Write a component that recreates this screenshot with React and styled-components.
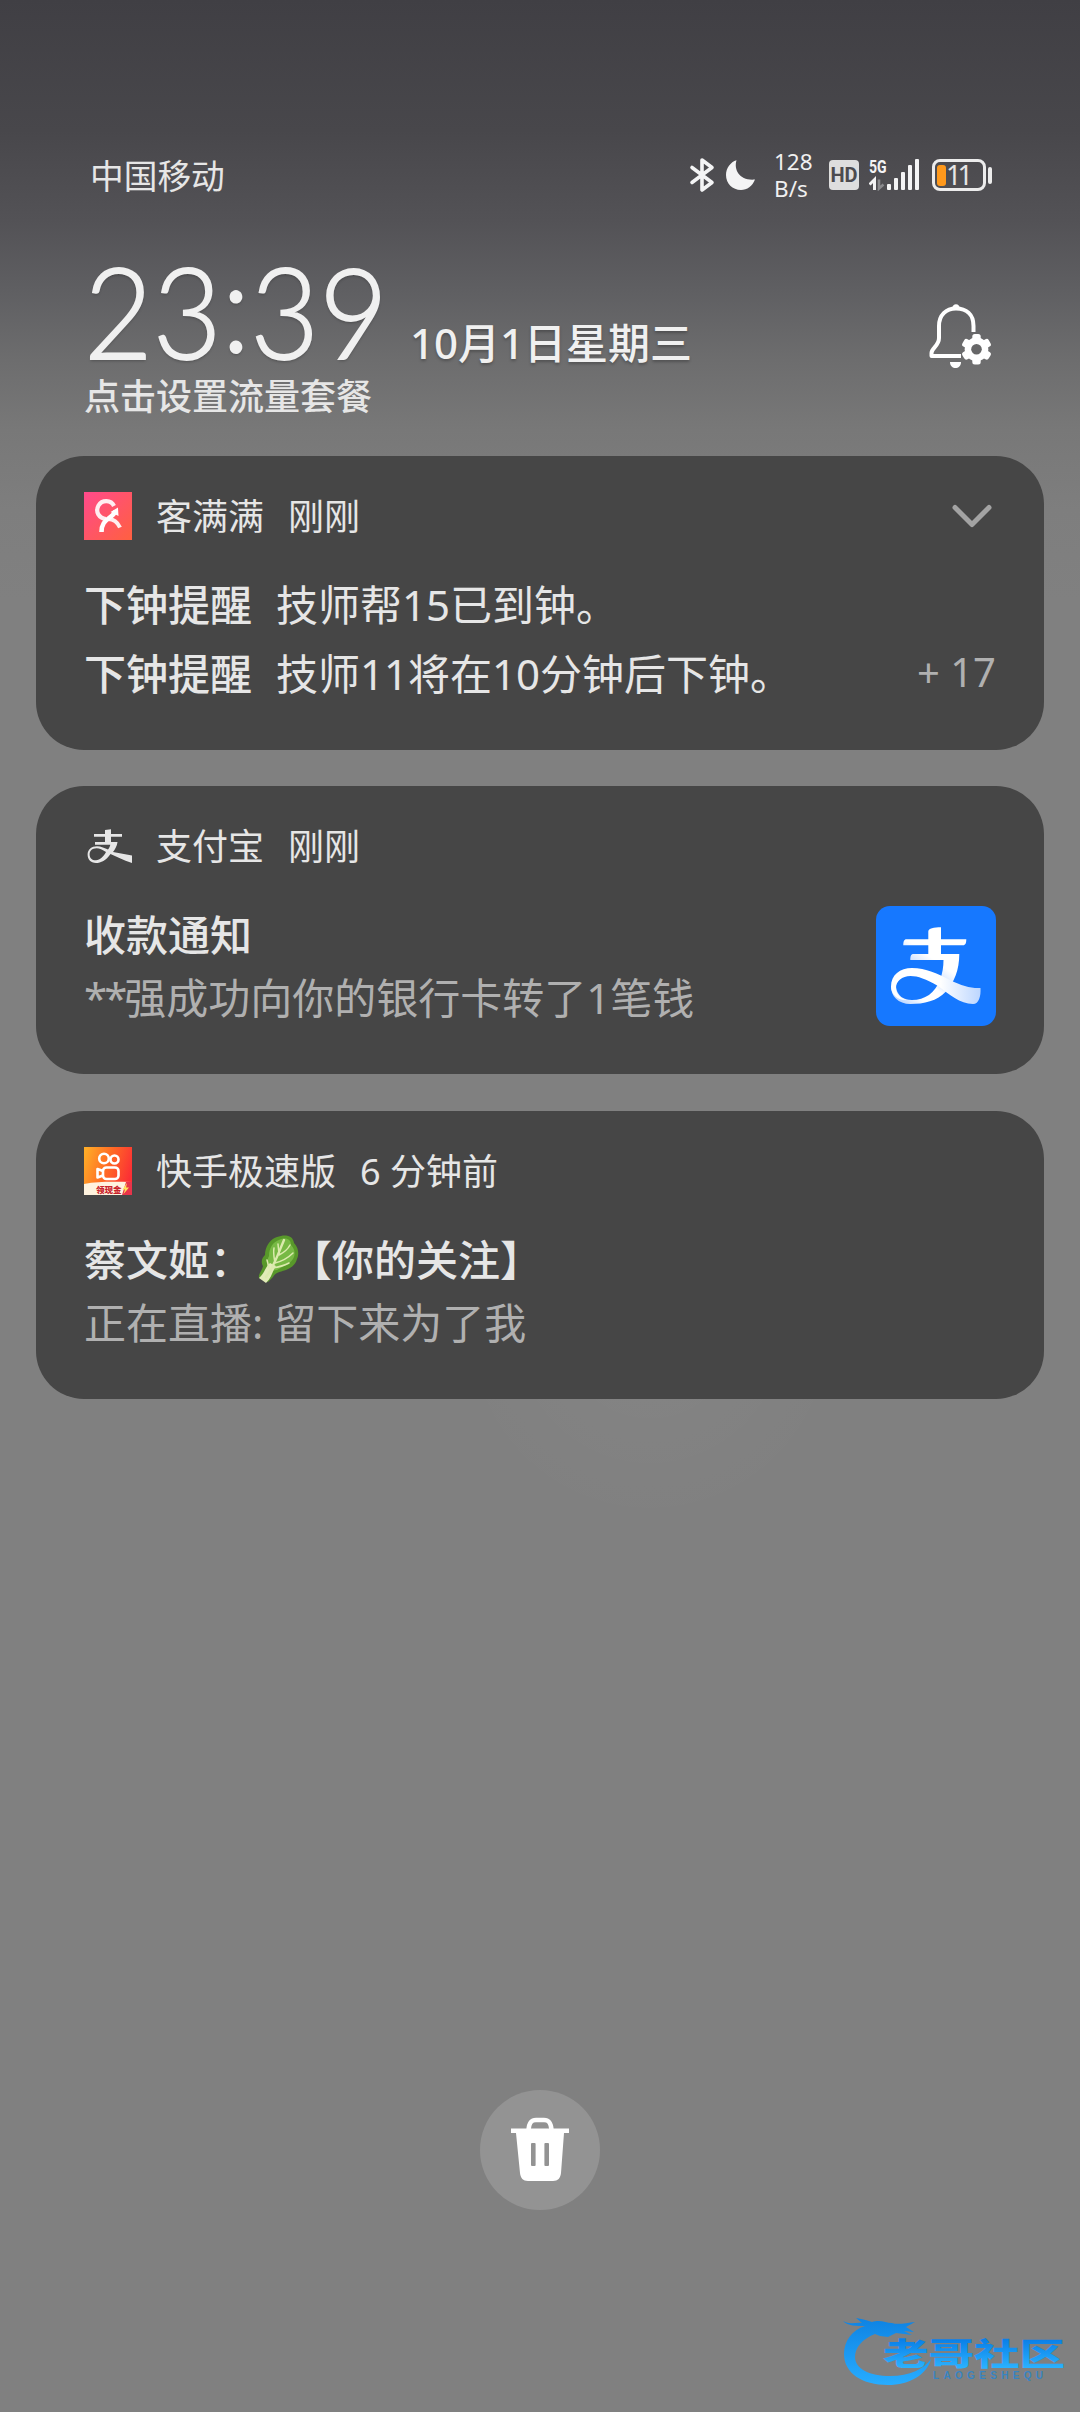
import styled, { createGlobalStyle } from "styled-components";

const notifications = [
  {
    id: "kemanman",
    app: "客满满",
    time: "刚刚",
    icon: <KemanmanIcon />,
    height: 294,
    expandable: true,
    lines: [
      { title: "下钟提醒", text: "技师帮15已到钟。" },
      { title: "下钟提醒", text: "技师11将在10分钟后下钟。" },
    ],
    more: "+ 17",
  },
  {
    id: "alipay",
    app: "支付宝",
    time: "刚刚",
    icon: <AlipayGlyph />,
    height: 288,
    title: "收款通知",
    body: (
      <>
        <Mask>**</Mask>强成功向你的银行卡转了1笔钱
      </>
    ),
    picture: <AlipayLogo />,
  },
  {
    id: "kuaishou",
    app: "快手极速版",
    time: "6 分钟前",
    icon: <KuaishouIcon />,
    height: 288,
    title: (
      <>
        蔡文姬：
        <CabbageIcon />
        【你的关注】
      </>
    ),
    body: "正在直播: 留下来为了我",
  },
];

export default function App() {
  return (
    <Screen>
      <GlobalStyle />
      <StatusBar />
      <Header>
        <div>
          <ClockRow>
            <Clock>
              <span>23</span>
              <Colon>:</Colon>
              <span>39</span>
            </Clock>
            <DateText>10月1日星期三</DateText>
          </ClockRow>
          <PlanHint>点击设置流量套餐</PlanHint>
        </div>
        <BellButton aria-label="通知设置">
          <BellIcon />
        </BellButton>
      </Header>
      <List>
        {notifications.map((item) => (
          <NotificationCard key={item.id} {...item} />
        ))}
      </List>
      <ClearButton aria-label="清除">
        <TrashIcon />
      </ClearButton>
      <Watermark />
    </Screen>
  );
}

function Mask({ children }) {
  return <MaskText>{children}</MaskText>;
}

function StatusBar() {
  return (
    <Status>
      <Carrier>中国移动</Carrier>
      <StatusIcons>
        <svg width="26" height="36" viewBox="0 0 26 36">
          <path
            d="M3 10.5 L23 25.5 L13 33 V3 L23 10.5 L3 25.5"
            fill="none"
            stroke="#f4f4f5"
            strokeWidth="3.6"
            strokeLinecap="round"
            strokeLinejoin="round"
          />
        </svg>
        <MoonSvg width="32" height="32" viewBox="0 0 32 32">
          <path
            d="M11.5 1.2 C8.5 11 15 22 30 20.5 C27.5 27 22 31 16 31 C7.5 31 1 24.5 1 16 C1 9 5.5 3 11.5 1.2 Z"
            fill="#f4f4f5"
          />
        </MoonSvg>
        <Speed>
          <span>128</span>
          <span>B/s</span>
        </Speed>
        <HdBadge>HD</HdBadge>
        <Signal>
          <SignalType>5G</SignalType>
          <svg width="50" height="32" viewBox="0 0 50 32">
            <path d="M0.5 25.5 L5.5 20.5 V31" stroke="#f4f4f5" strokeWidth="3" fill="none" />
            <path d="M10 20.5 V29.5 L14.5 25.5" stroke="#8a8a8d" strokeWidth="2.6" fill="none" />
            <g fill="#f4f4f5">
              <rect x="18" y="25" width="4" height="6" rx="1" />
              <rect x="25" y="19" width="4" height="12" rx="1" />
              <rect x="32" y="13" width="4" height="18" rx="1" />
              <rect x="39" y="6" width="4" height="25" rx="1" />
              <rect x="46" y="0" width="4" height="31" rx="1" />
            </g>
          </svg>
        </Signal>
        <Battery>
          <BatteryBody>
            <BatteryLevel />
            11
          </BatteryBody>
          <BatteryTip />
        </Battery>
      </StatusIcons>
    </Status>
  );
}

function NotificationCard({ app, time, icon, height, expandable, lines, more, title, body, picture }) {
  return (
    <Card $height={height}>
      <CardHeader>
        {icon}
        <AppName>{app}</AppName>
        <Time>{time}</Time>
        {expandable && (
          <Chevron width="42" height="28" viewBox="0 0 42 28">
            <path d="M4 5.5 L21 22.5 L38 5.5" />
          </Chevron>
        )}
      </CardHeader>
      {lines ? (
        <Lines>
          {lines.map((line) => (
            <Line key={line.text}>
              <strong>{line.title}</strong>
              <span>{line.text}</span>
            </Line>
          ))}
          <More>{more}</More>
        </Lines>
      ) : (
        <Content>
          <div>
            <Title>{title}</Title>
            <Body>{body}</Body>
          </div>
          {picture}
        </Content>
      )}
    </Card>
  );
}

function BellIcon() {
  return (
    <svg width="64" height="68" viewBox="0 0 64 68">
      <path
        d="M44.5 30 V24 C44.5 12 37 6.5 27 6.5 C17 6.5 10 13 10 24 V36 C10 44 2.5 46 2.5 51 V54 H32"
        fill="none"
        stroke="#fff"
        strokeWidth="4"
        strokeLinejoin="round"
      />
      <path d="M23 7 C23 0.5 31 0.5 31 7 Z" fill="#fff" />
      <path d="M21 60 H32 C32 68 21 68 21 60 Z" fill="#fff" />
      <g transform="translate(47.5 47.3)">
        <g fill="#fff">
          {[0, 60, 120].map((angle) => (
            <rect key={angle} x="-4.2" y="-15.2" width="8.4" height="30.4" rx="2.5" transform={`rotate(${angle})`} />
          ))}
          <circle r="11.8" />
        </g>
        <circle r="5.3" fill="#676768" />
      </g>
    </svg>
  );
}

function KemanmanIcon() {
  return (
    <svg width="48" height="48" viewBox="0 0 48 48">
      <defs>
        <linearGradient id="kmm" x1="0" y1="0" x2="1" y2="1">
          <stop offset="0" stopColor="#ff4a8c" />
          <stop offset="1" stopColor="#ff6040" />
        </linearGradient>
      </defs>
      <rect width="48" height="48" fill="url(#kmm)" />
      <g fill="none" stroke="#fff">
        <path d="M30 14 C27 7.5 18 7.5 14.5 13.5 C11 20 15 26 22 27" strokeWidth="4.2" strokeOpacity=".9" />
        <path d="M24 27 C30 27 33.5 30 36 35.5" strokeWidth="4" strokeOpacity=".9" />
        <path d="M17.5 40 C17.5 32 21 29 25 26 C28.5 23.5 30.5 22 31.5 19" strokeWidth="4.6" />
      </g>
      <path d="M26.5 20 L34 15.5 L34.5 24 Z" fill="#fff" />
    </svg>
  );
}

function AlipayGlyph() {
  return (
    <svg width="48" height="48" viewBox="0 0 48 48" fill="#e6e6e6">
      <path d="M21 8 L27 7.3 V12 H38 V14.7 H27 V20 H33.5 C33 24 31 27.5 29 30 L48 33.5 V41 C39 38 32 34.5 26.5 32 C22 38.5 17 41 12 41 C6.5 41 3.6 37 3.6 32.5 C3.6 27.5 7.5 24.2 13 24.2 C17 24.2 21 26.2 24 27.5 C25.5 25.5 26 24 26.3 22.7 H11 V20 H21 V14.7 H10 V12 H21 Z M22 30 C18.5 27.5 15.5 26.2 12.5 26.2 C8 26.2 5.6 29 5.6 32.5 C5.6 36.5 8.5 38.5 12 38.3 C16 38 19.5 34.5 22 30 Z" />
    </svg>
  );
}

function AlipayLogo() {
  return (
    <svg width="120" height="120" viewBox="0 0 120 120">
      <defs>
        <linearGradient id="tail" x1="0" x2="1">
          <stop offset="0" stopColor="#fff" />
          <stop offset=".55" stopColor="#fff" />
          <stop offset="1" stopColor="#bcd6ff" />
        </linearGradient>
        <linearGradient id="leg" x1="0.7" y1="0.3" x2="0.2" y2="1">
          <stop offset="0" stopColor="#fff" />
          <stop offset=".2" stopColor="#fff" />
          <stop offset=".42" stopColor="#cfe1ff" />
          <stop offset=".55" stopColor="#fff" />
          <stop offset=".8" stopColor="#fff" />
          <stop offset="1" stopColor="#c3daff" />
        </linearGradient>
      </defs>
      <rect width="120" height="120" rx="14" fill="#1678ff" />
      <path
        d="M52.3 25.5 C52.3 22.5 58 21.3 65 21.3 V33.3 H90.3 C90.3 37 89.5 39.3 87 39.3 H65 V48 H83.3 C83.3 64 78 77 70 85.5 C61 95 48 98 34.5 98 C22 98 15 90 15 80.5 L20 81 C21 90 28 94 36 94 C49 94 59 87 64 74 C66.5 67 67.5 61 67.5 54 H34.3 C34.3 50 35 48 37.5 48 H52.3 V39.3 H27.3 C27.3 35.5 28 33.3 30.5 33.3 H52.3 Z"
        fill="url(#leg)"
      />
      <path
        d="M15 80.5 C15 69 24 62 36 62 C50 62 62 68 74 74 C86 80 95 82.5 104.5 82 C105 90 103 98 97 98 C84 98 73 88 62 80 C50 73 42 70 34.5 70 C26 70 20 75 20 82 C20 88 25 92.5 31 94 C22 95 15 88 15 80.5 Z"
        fill="url(#tail)"
      />
    </svg>
  );
}

function KuaishouIcon() {
  return (
    <svg width="48" height="48" viewBox="0 0 48 48">
      <defs>
        <linearGradient id="ks" x1="0" y1="0.2" x2="1" y2="0.5">
          <stop offset="0" stopColor="#ffab27" />
          <stop offset=".5" stopColor="#ff6a25" />
          <stop offset="1" stopColor="#fb2f35" />
        </linearGradient>
      </defs>
      <rect width="48" height="48" fill="url(#ks)" />
      <g fill="none" stroke="#fff" strokeWidth="2.6">
        <circle cx="20" cy="11.5" r="4.8" />
        <circle cx="30.5" cy="12.5" r="4" />
        <rect x="19" y="20.5" width="15.5" height="11.5" rx="3.5" />
        <path d="M19 24 L13.5 22 V30.5 L19 28.5" strokeLinejoin="round" />
      </g>
      <path d="M0 37 C16 34 32 35 48 35 V48 H0 Z" fill="#fff3df" />
      <path d="M38 48 L42 35 H48 V48 Z" fill="#e8344a" />
      <TinyLabel x="12" y="46">领现金</TinyLabel>
      <path d="M43 36 L38.5 42.5 H41 L39.5 47 L45 40.5 H42 Z" fill="#ffe25a" />
    </svg>
  );
}

function CabbageIcon() {
  return (
    <Emoji width="44" height="50" viewBox="0 0 44 50">
      <path
        d="M20 2 C28 -1 36 0 37 8 C42 13 42 20 40 24 C38 31 33 33 29 35 C22 37 18 38 16 42 L11 47 L2 43 C1 39 5 36 6 31 C3 26 6 22 8 20 C8 12 13 4 20 2 Z"
        fill="#58982a"
      />
      <path
        d="M22 5 C29 2 34 4 34 10 C39 15 38 21 36 24 C32 30 26 31 20 35 L12 36 C9 30 10 25 12 21 C12 13 16 7 22 5 Z"
        fill="#77b944"
      />
      <path d="M2 43 C8 38 8 32 13 28 L19 31 C15 37 15 42 9 48 Z" fill="#e2ebb8" />
      <g fill="none" stroke="#dbeaad" strokeWidth="1.5" strokeLinecap="round">
        <path d="M9 42 C17 32 21 19 27 5" strokeWidth="2.4" />
        <path d="M18 28 C17 22 16 18 17 13 M22 19 L21 9 M22 20 C28 17 31 14 33 10 M18 28 C26 26 31 23 36 18 M15 33 C22 32 27 31 32 28 M12 33 L10 25" />
      </g>
    </Emoji>
  );
}

function TrashIcon() {
  return (
    <svg width="60" height="66" viewBox="0 0 60 66">
      <path d="M18.5 13 C19 6 21 3 26 3 H34 C39 3 41 6 41.5 13" fill="none" stroke="#fff" strokeWidth="4.5" />
      <path d="M1 11.5 H59 V16 H54 L51 56 C50.5 61 48 64 43 64 H18 C13 64 10.5 61 10 56 L6 16 H1 Z" fill="#fff" />
      <rect x="21" y="26" width="4.6" height="23" rx="1" fill="#939393" />
      <rect x="34.4" y="26" width="4.6" height="23" rx="1" fill="#939393" />
    </svg>
  );
}

function Watermark() {
  return (
    <WatermarkBox>
      <svg width="226" height="76" viewBox="0 0 226 76">
        <defs>
          <linearGradient id="dragon" x1="0" y1="8" x2="0" y2="72" gradientUnits="userSpaceOnUse">
            <stop offset="0" stopColor="#0f84e4" />
            <stop offset="1" stopColor="#27acff" />
          </linearGradient>
          <linearGradient id="brand" x1="0" y1="28" x2="0" y2="56" gradientUnits="userSpaceOnUse">
            <stop offset="0" stopColor="#0a80e8" />
            <stop offset="1" stopColor="#2bb2ff" />
          </linearGradient>
        </defs>
        <path
          d="M1 9 C8 13 14 10 20 11 L14 6 C22 7 26 9 30 10 C38 7 44 11 50 11 C56 13 64 11 73 10 L64 15 L72 20 L62 19 L70 23 L54 21 L46 25 L38 24 L33 22 C20 27 13 36 13 45 C13 57 28 64 48 64 C68 64 82 57 89 47 C85 63 67 73 46 73 C20 73 2 61 2 42 C2 29 10 18 23 14 C14 14 6 14 1 9 Z"
          fill="url(#dragon)"
        />
        <BrandText x="41" y="53" textLength="182" lengthAdjust="spacingAndGlyphs">
          老哥社区
        </BrandText>
        <BrandLatin x="91" y="67" textLength="110">
          LAOGESHEQU
        </BrandLatin>
      </svg>
    </WatermarkBox>
  );
}

const GlobalStyle = createGlobalStyle`
  * {
    box-sizing: border-box;
  }
  body {
    margin: 0;
    background: #808080;
    font-family: "Noto Sans", "Noto Sans CJK SC", sans-serif;
    color: #e6e6e6;
  }
  button {
    padding: 0;
    border: 0;
    background: none;
    font: inherit;
  }
  svg {
    display: block;
    flex-shrink: 0;
  }
`;

const Screen = styled.main`
  position: relative;
  display: flex;
  flex-direction: column;
  width: 1080px;
  height: 2412px;
  overflow: hidden;
  background:
    radial-gradient(circle at 650px 1330px, rgba(255, 255, 255, 0.035), transparent 200px),
    linear-gradient(
      #403f44 0,
      #48474b 130px,
      #535256 220px,
      #5f5f62 290px,
      #6d6d6e 360px,
      #787878 430px,
      #7e7e7e 510px,
      #808080 600px
    );
`;

const Status = styled.header`
  display: flex;
  align-items: center;
  justify-content: space-between;
  height: 70px;
  margin-top: 140px;
  padding: 0 88px 0 90px;
`;

const Carrier = styled.span`
  padding-top: 1px;
  font-size: 33.7px;
  line-height: 40px;
`;

const StatusIcons = styled.div`
  display: flex;
  align-items: center;
`;

const MoonSvg = styled.svg`
  margin-left: 10px;
`;

const Speed = styled.div`
  display: flex;
  flex-direction: column;
  width: 40px;
  margin-left: 17px;
  font-size: 22.5px;
  line-height: 27px;
  color: #f0f0f0;
`;

const HdBadge = styled.span`
  width: 30px;
  height: 30px;
  margin-left: 15px;
  border-radius: 4px;
  background: #dedede;
  color: #4c4b4f;
  font: 700 20px/30px Roboto, sans-serif;
  text-align: center;
`;

const Signal = styled.div`
  position: relative;
  margin-left: 10px;
`;

const SignalType = styled.span`
  position: absolute;
  top: 0;
  left: 0;
  font: 700 19px/15px Roboto, sans-serif;
  transform: scaleX(0.74);
  transform-origin: left;
  color: #f4f4f5;
`;

const Battery = styled.div`
  display: flex;
  align-items: center;
  margin-left: 13px;
`;

const BatteryBody = styled.div`
  display: flex;
  align-items: center;
  width: 54px;
  height: 32px;
  padding-left: 2px;
  border: 3px solid #ececec;
  border-radius: 8px;
  font-size: 27px;
  line-height: 26px;
  letter-spacing: -4px;
`;

const BatteryLevel = styled.span`
  width: 9px;
  height: 21px;
  border-radius: 3px;
  background: #ff991c;
`;

const BatteryTip = styled.span`
  width: 4px;
  height: 17px;
  margin-left: 2px;
  border-radius: 2px;
  background: #ececec;
`;

const Header = styled.section`
  display: flex;
  justify-content: space-between;
  height: 246px;
  padding: 52px 87px 0 84px;
`;

const ClockRow = styled.div`
  display: flex;
  align-items: baseline;
  height: 110px;
`;

const Clock = styled.time`
  display: flex;
  width: 326px;
  font: 300 127px/96px Lato, sans-serif;
  color: #f0f0f0;
  text-shadow: 0 2px 3px rgba(0, 0, 0, 0.25);
  -webkit-text-stroke: 1.8px #f0f0f0;
  transform: scaleX(0.935);
  transform-origin: left;
`;

const Colon = styled.span`
  transform: translateY(-7px);
`;

const DateText = styled.span`
  font-size: 42px;
  font-weight: 500;
  line-height: 50px;
  color: #f0f0f0;
  text-shadow: 0 2px 3px rgba(0, 0, 0, 0.25);
`;

const PlanHint = styled.p`
  margin: 5px 0 0;
  font-size: 36px;
  font-weight: 500;
  line-height: 40px;
`;

const BellButton = styled.button`
  align-self: flex-start;
  margin-top: 40px;
`;

const List = styled.section`
  display: flex;
  flex-direction: column;
  gap: 36px;
  padding: 0 36px;
`;

const Card = styled.article`
  height: ${({ $height }) => $height}px;
  padding: 36px 48px 0;
  border-radius: 48px;
  background: #464646;

  &:last-child {
    margin-top: 1px;
  }
`;

const CardHeader = styled.div`
  display: flex;
  align-items: center;
  height: 48px;
  font-size: 36px;
  line-height: 48px;
`;

const AppName = styled.span`
  margin-left: 24px;
  padding-top: 1px;
`;

const Time = styled.span`
  margin-left: 24px;
  padding-top: 1px;
`;

const Chevron = styled.svg`
  margin-left: auto;
  margin-right: 3px;
  fill: none;
  stroke: #a3a3a3;
  stroke-width: 5;
  stroke-linecap: round;
  stroke-linejoin: round;
`;

const Lines = styled.div`
  position: relative;
  margin-top: 30px;
`;

const Line = styled.p`
  display: flex;
  gap: 24px;
  margin: 0;
  font-size: 42px;
  line-height: 69px;

  strong {
    font-weight: 500;
  }
`;

const More = styled.span`
  position: absolute;
  right: 0;
  bottom: 2px;
  font-size: 40px;
  line-height: 69px;
  color: #b0b0b0;
`;

const Content = styled.div`
  display: flex;
  align-items: center;
  justify-content: space-between;
  height: 126px;
  margin-top: 33px;
`;

const Title = styled.h2`
  display: flex;
  align-items: center;
  margin: 0;
  font-size: 42px;
  font-weight: 500;
  line-height: 63px;
`;

const Body = styled.p`
  margin: 0;
  font-size: 42px;
  line-height: 63px;
  color: #b0b0b0;
`;

const MaskText = styled.span`
  letter-spacing: -3px;
`;

const Emoji = styled.svg`
  margin: 0 -11px 0 5px;
`;

const TinyLabel = styled.text`
  font: 900 8.5px "Noto Sans CJK SC", sans-serif;
  fill: #c8232c;
`;

const ClearButton = styled.button`
  display: flex;
  align-items: center;
  justify-content: center;
  width: 120px;
  height: 120px;
  margin: auto auto 202px;
  border-radius: 50%;
  background: #939393;
`;

const WatermarkBox = styled.div`
  position: absolute;
  right: 12px;
  bottom: 24px;
`;

const BrandText = styled.text`
  font: 900 31px "Noto Sans CJK SC", sans-serif;
  fill: url(#brand);
`;

const BrandLatin = styled.text`
  font: 700 10px "Liberation Sans", sans-serif;
  fill: #1e86d8;
  fill-opacity: 0.75;
`;
